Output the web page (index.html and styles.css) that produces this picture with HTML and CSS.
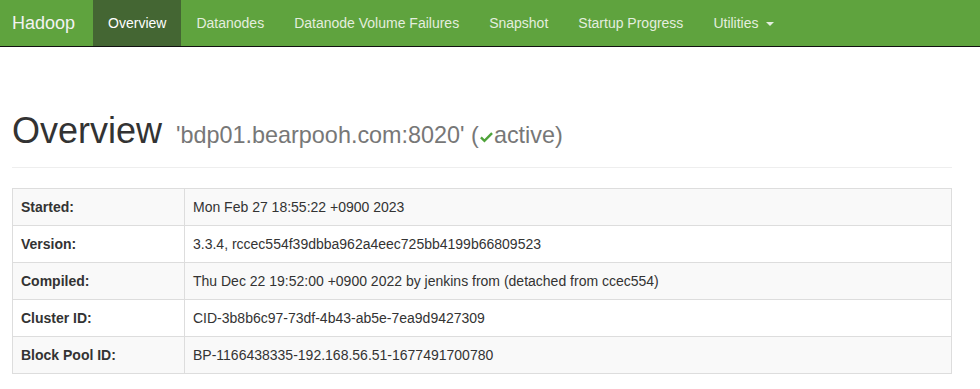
FILE: index.html
```
<!DOCTYPE html>
<html lang="en">
<head>
  <meta charset="UTF-8">
  <title>Namenode information</title>
<link rel="stylesheet" href="styles.css">
</head>
<body>
  <nav class="navbar">
    <a class="brand" href="#">Hadoop</a>
    <ul class="nav">
      <li class="active"><a href="#">Overview</a></li>
      <li><a href="#">Datanodes</a></li>
      <li><a href="#">Datanode Volume Failures</a></li>
      <li><a href="#">Snapshot</a></li>
      <li><a href="#">Startup Progress</a></li>
      <li><a href="#">Utilities <span class="caret"></span></a></li>
    </ul>
  </nav>
  <div class="container">
    <div class="page-header">
      <h1>Overview <small>'bdp01.bearpooh.com:8020' (<svg class="ok" viewBox="0 0 14 12" width="13" height="12"><path d="M1 6.5 L4.8 10.2 L13 1.8" fill="none" stroke="#4fa33a" stroke-width="2.6" stroke-linejoin="miter"/></svg>active)</small></h1>
    </div>
    <table class="info">
      <tr><th>Started:</th><td>Mon Feb 27 18:55:22 +0900 2023</td></tr>
      <tr><th>Version:</th><td>3.3.4, rccec554f39dbba962a4eec725bb4199b66809523</td></tr>
      <tr><th>Compiled:</th><td>Thu Dec 22 19:52:00 +0900 2022 by jenkins from (detached from ccec554)</td></tr>
      <tr><th>Cluster ID:</th><td>CID-3b8b6c97-73df-4b43-ab5e-7ea9d9427309</td></tr>
      <tr><th>Block Pool ID:</th><td>BP-1166438335-192.168.56.51-1677491700780</td></tr>
    </table>
  </div>
</body>
</html>
```
FILE: styles.css
```
html, body {
  margin: 0;
  padding: 0;
}
body {
  font-family: "Liberation Sans", Arial, sans-serif;
  font-size: 14px;
  line-height: 1.42857;
  color: #333;
  background: #fff;
}
a {
  text-decoration: none;
}
.navbar {
  display: flex;
  background-color: #5fa33e;
  border-bottom: 1px solid #111;
  height: 46px;
}
.brand {
  font-size: 18px;
  line-height: 20px;
  padding: 13px 18px 13px 12px;
  color: #f2f2f2;
}
.nav {
  display: flex;
  list-style: none;
  margin: 0;
  padding: 0;
}
.nav a {
  display: block;
  padding: 13px 15px;
  line-height: 20px;
  color: #e4eedf;
}
.nav .active a {
  background-color: #446633;
  color: #fff;
}
.caret {
  display: inline-block;
  width: 0;
  height: 0;
  margin-left: 4px;
  vertical-align: middle;
  border-top: 4px solid #e4eedf;
  border-left: 4px solid transparent;
  border-right: 4px solid transparent;
}
.container {
  width: 940px;
  padding: 0 12px;
}
.page-header {
  margin: 64px 0 20px;
  padding-bottom: 16px;
  border-bottom: 1px solid #eee;
}
h1 {
  margin: 0;
  font-size: 36px;
  font-weight: 500;
  line-height: 1.1;
}
h1 small {
  font-size: 65%;
  font-weight: normal;
  line-height: 1;
  color: #777;
  margin-left: 4px;
}
.ok {
  display: inline-block;
  vertical-align: baseline;
  margin: 0 1px 0 1px;
}
.info {
  width: 100%;
  border-collapse: collapse;
  border: 1px solid #ddd;
}
.info th, .info td {
  border: 1px solid #ddd;
  padding: 9px 8px 7px;
  text-align: left;
  vertical-align: top;
}
.info th {
  width: 155px;
  font-weight: bold;
}
.info tr:nth-child(odd) {
  background-color: #f9f9f9;
}
```
